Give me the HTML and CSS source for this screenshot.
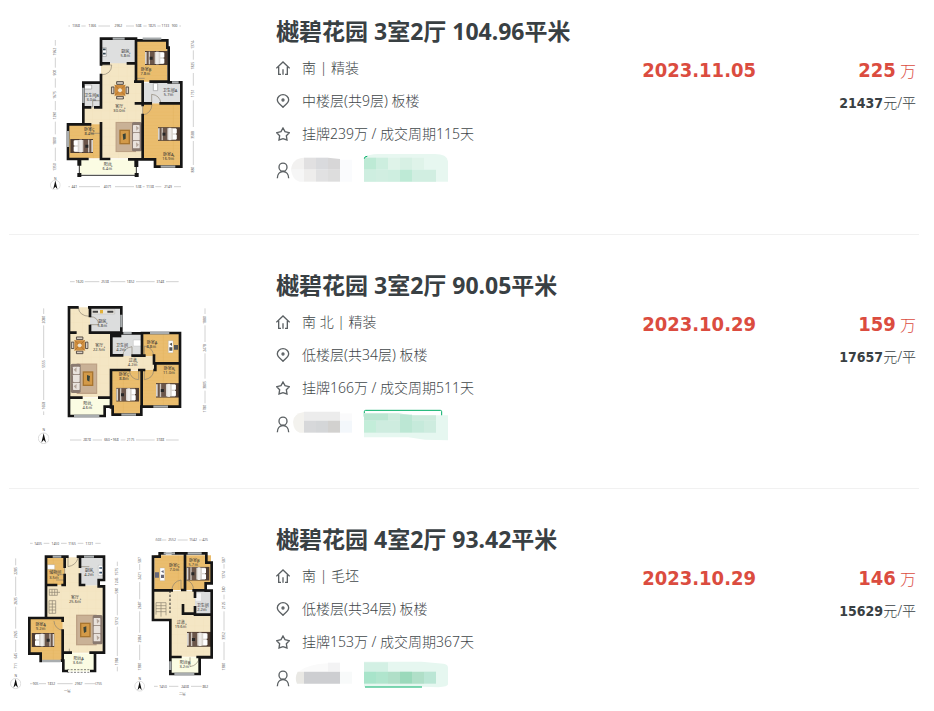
FILE: index.html
```
<!DOCTYPE html>
<html lang="zh-CN">
<head>
    <meta charset="UTF-8">
    <meta name="viewport" content="width=device-width, initial-scale=1.0">
    <title>樾碧花园 成交记录</title>
    <link rel="stylesheet" href="styles.css">
</head>
<body>
    <!-- shared icons and furniture -->
    <svg class="defs" width="0" height="0" aria-hidden="true">
        <symbol id="icon-home" viewBox="0 0 42 42">
            <path d="M1 22 L21 3 L41 22 M8 17 V40 H15 M34 17 V40 H27 M21 25 V41"/>
        </symbol>
        <symbol id="icon-pin" viewBox="0 0 42 42">
            <path d="M21 40 C16 34 4 27 4 17 A17 15 0 0 1 38 17 C38 27 26 34 21 40 Z"/>
            <circle cx="21" cy="18" r="3"/>
        </symbol>
        <symbol id="icon-star" viewBox="0 0 42 42">
            <path d="M21 3 L27 14 L40 17 L31 26 L33 39 L21 35 L9 39 L11 26 L2 17 L15 14 Z"/>
        </symbol>
        <symbol id="icon-user" viewBox="0 0 42 50">
            <circle cx="21" cy="15" r="12"/>
            <path d="M4 48 C4 36 11 28 21 28 C31 28 38 36 38 48"/>
        </symbol>
        <symbol id="bed" viewBox="0 0 68 42">
            <rect width="68" height="42" fill="#4d3b30"/>
            <rect y="3" width="56" height="36" fill="#d9d5d0"/>
            <rect x="5" y="2" width="24" height="38" fill="#6b564a"/>
            <rect x="11" y="2" width="4" height="38" fill="#cfc8c0"/>
            <rect x="33" y="2" width="8" height="38" fill="#eeebe8"/>
            <rect x="46" y="5" width="12" height="14" fill="#fff"/>
            <rect x="46" y="23" width="12" height="14" fill="#fff"/>
            <path d="M14 17 h9 v9 h-9z" fill="#262626"/>
        </symbol>
        <symbol id="sofa" viewBox="0 0 80 92">
            <rect width="62" height="92" fill="#bda286"/>
            <rect x="4" y="4" width="54" height="84" fill="#c9b196"/>
            <rect x="12" y="24" width="32" height="44" fill="#a8752f"/>
            <rect x="16" y="28" width="24" height="36" fill="#d39a48"/>
            <path d="M22 38 l9 -3 v16 l-7 4z" fill="#3a4438"/>
            <rect x="50" y="1" width="30" height="88" rx="5" fill="#8a7a70"/>
            <rect x="53" y="10" width="20" height="22" rx="2" fill="#e9e2dc"/>
            <rect x="53" y="34" width="20" height="22" rx="2" fill="#e9e2dc"/>
            <rect x="53" y="58" width="20" height="22" rx="2" fill="#e9e2dc"/>
            <path d="M62 12 l9 7 -8 8z M62 62 l9 7 -8 8z" fill="#b5a69b"/>
        </symbol>
        <symbol id="dining" viewBox="0 0 56 56">
            <path d="M18 2 h20 v8 h-20z M18 46 h20 v8 h-20z M2 18 h8 v20 h-8z M46 18 h8 v20 h-8z" fill="#d8cfc4" stroke="#554b43" stroke-width="3"/>
            <rect x="12" y="12" width="32" height="32" fill="#cf8d3e"/>
            <path d="M12 12 L44 44 M44 12 L12 44" stroke="#a56a2a" stroke-width="2"/>
            <circle cx="28" cy="28" r="6" fill="#eee3cf"/>
        </symbol>
        <symbol id="compass" viewBox="0 0 34 50">
            <circle cx="17" cy="31" r="16" fill="#fff" stroke="#ccc" stroke-width="2"/>
            <path d="M17 16 L24 44 L17 36 L10 44 Z" fill="#111"/>
        </symbol>
        <pattern id="wood" width="120" height="10" patternUnits="userSpaceOnUse">
            <rect width="120" height="10" fill="#eabd6e"/>
            <path d="M0 0 H120 M40 0 V10" stroke="#e0ae59"/>
        </pattern>
        <pattern id="tile" width="26" height="26" patternUnits="userSpaceOnUse">
            <rect width="26" height="26" fill="#f4e6c4"/>
            <path d="M0 0 H26 M0 0 V26" stroke="#efddb3"/>
        </pattern>
    </svg>

    <ul class="deal-list">
        <li class="deal">
            <svg class="plan" viewBox="-93 -9 720 534" role="img" aria-label="户型图">
                <path d="M183 72 H288 V200 H308 V430 H183 V280 H130 V325 H183 V280 Z" fill="url(#tile)"/>
                <rect x="130" y="275" width="58" height="54" fill="url(#tile)"/>
                <path d="M288 72 H382 V200 H288Z M308 265 H422 V453 H345 V433 H308Z M84 328 H183 V430 H84Z" fill="url(#wood)"/>
                <path d="M183 72 H288 V145 H183Z M130 203 H183 V277 H130Z M308 203 H422 V265 H308Z" fill="#dedfdf"/>
                <rect x="118" y="433" width="172" height="46" fill="#fbfce3"/>
                <use href="#bed" x="314" y="108" width="70" height="42"/>
                <use href="#bed" x="354" y="327" width="66" height="60"/>
                <use href="#bed" x="-160" y="372" width="70" height="42" transform="scale(-1 1)"/>
                <use href="#dining" x="212" y="198" width="56" height="56"/>
                <use href="#sofa" x="226" y="320" width="80" height="92"/>
                <path d="M187 98 h12 v26 h-12z M133 210 h22 v12 h-22z M340 205 h13 v22 h-13z" fill="#fff" stroke="#999" stroke-width="2"/>
                <path d="M189 103 h8 M189 116 h8" stroke="#344650" stroke-width="5"/>
                <path class="door" d="M183 150 h32 q0 28 -32 30 M308 268 v32 q26 -4 28 -32 M335 265 v-27 q24 2 28 27 M152 325 v30 h30 M158 277 v-20 h24 M288 168 v22 h26"/>
                <path class="wall" d="M183 148 V71 H288 V200 M288 76 H382 V98 H386 V200 H332 M288 145 H264 M183 145 H206 M183 180 V203 H130 V328 H84 V432 H142 M130 277 H150 M183 203 V277 H166 M130 328 H150 M183 325 V432 H207 M286 200 H308 V270 M288 265 H332 M362 265 H422 M386 202 H424 V455 H345 V433 H268 M308 300 V433"/>
                <path class="rail" d="M118 434 V481 H289 V434"/>
                <path d="M112 474 h12 v12 h-12z M284 474 h12 v12 h-12z M112 432 h12 v20 h-12z M283 432 h12 v24 h-12z" fill="#151515"/>
                <path class="glass" d="M218 71 h36 M308 71 h56 M396 202 h20 M130 218 v46 M84 348 v48 M362 455 h44"/>
                <g class="plan-label">
                    <text x="256" y="114">厨房</text><text x="256" y="126">5.8㎡</text>
                    <text x="318" y="169">卧室B</text><text x="316" y="181">7.8㎡</text>
                    <text x="155" y="246">卫生间B</text><text x="154" y="258">3.0㎡</text>
                    <text x="390" y="232">卫生间A</text><text x="386" y="244">5.7㎡</text>
                    <text x="238" y="278">客厅</text><text x="238" y="290">30.0㎡</text>
                    <text x="148" y="348">卧室C</text><text x="148" y="360">8.4㎡</text>
                    <text x="385" y="424">卧室A</text><text x="385" y="436">16.9㎡</text>
                    <text x="203" y="454">阳台</text><text x="202" y="466">6.4㎡</text>
                </g>
                <g class="plan-dim">
                    <text x="46" y="494">N</text>
                    <text x="108" y="37">1368</text><text x="157" y="37">1366</text><text x="235" y="37">2962</text><text x="296" y="37">508</text><text x="336" y="37">1825</text><text x="376" y="37">1133</text><text x="404" y="37">900</text>
                    <text x="103" y="519">441</text><text x="203" y="519">4071</text><text x="296" y="519">538</text><text x="330" y="519">1138</text><text x="384" y="519">2149</text>
                    <g transform="translate(49 0) rotate(-90)"><text x="-110">1962</text><text x="-173">900</text><text x="-240">1675</text><text x="-302">1290</text><text x="-378">1800</text><text x="-456">1350</text></g>
                    <g transform="translate(463 0) rotate(-90)"><text x="-90">1374</text><text x="-152">1825</text><text x="-235">1751</text><text x="-360">3588</text><text x="-464">880</text></g>
                </g>
                <path class="ruler" d="M85 33 H90 M124 33 H137 M175 33 H210 M258 33 H282 M310 33 H320 M352 33 H362 M418 33 H423 M85 515 H90 M117 515 H180 M225 515 H282 M308 515 H314 M346 515 H364 M402 515 H423 M46 75 V92 M46 128 V158 M46 190 V218 M46 258 V286 M46 320 V358 M46 398 V438 M460 75 V80 M460 106 V134 M460 174 V212 M460 256 V336 M460 378 V450"/>
                <use href="#compass" x="30" y="482" width="32" height="46"/>
            </svg>
            <div class="info">
                <h3 class="title">樾碧花园 3室2厅 104.96平米</h3>
                <p class="row"><svg class="icon"><use href="#icon-home"/></svg>南 | 精装</p>
                <p class="row"><svg class="icon"><use href="#icon-pin"/></svg>中楼层(共9层) 板楼</p>
                <p class="row"><svg class="icon"><use href="#icon-star"/></svg>挂牌239万 / 成交周期115天</p>
                <div class="agent">
                    <svg class="icon icon-user"><use href="#icon-user"/></svg>
                    <svg class="mosaic" viewBox="75 145 474 102" aria-hidden="true">
                        <path d="M117 159 Q82 160 78 195 H117Z" fill="#f2f1f0"/>
                        <path d="M78 195 H117 V231 H104 Q82 226 78 195Z" fill="#f6f6f6"/>
                        <path d="M117 159 h36 v36 h-36z" fill="#e1e0e1"/>
                        <path d="M153 159 h36 v36 h-36z" fill="#d9dadd"/>
                        <path d="M189 159 L225 163 V195 H189z" fill="#d7d6d7"/>
                        <path d="M117 195 h36 v36 h-36z" fill="#eeedec"/>
                        <path d="M153 195 h36 v36 h-36z" fill="#e1e1e2"/>
                        <path d="M189 195 h36 v36 h-36z" fill="#dddddd"/>
                        <path d="M225 165 h36 v66 h-36z" fill="#fafbfd"/>
                        <path d="M297 159 Q310 148 340 148 H510 Q546 148 549 170 V231 H297Z" fill="#e7f7f0"/>
                        <path d="M297 159 h36 v36 h-36z" fill="#bdead5"/>
                        <path d="M333 159 h36 v36 h-36z" fill="#cdeedf"/>
                        <path d="M369 159 h36 v36 h-36z M441 159 h36 v36 h-36z" fill="#dff3e9"/>
                        <path d="M405 159 h36 v36 h-36z" fill="#d7f0e4"/>
                        <path d="M297 195 h36 v36 h-36z M369 195 h36 v36 h-36z" fill="#ceeee0"/>
                        <path d="M333 195 h36 v36 h-36z M441 195 h72 v36 h-72z" fill="#d1eee1"/>
                        <path d="M405 195 h36 v36 h-36z" fill="#beead6"/>
                        <path d="M298 162 Q298 155 307 155" fill="none" stroke="#00ae66" stroke-width="3"/>
                    </svg>
                </div>
            </div>
            <div class="date">2023.11.05</div>
            <div class="price">
                <p class="total"><b>225</b> 万</p>
                <p class="unit"><b>21437</b>元/平</p>
            </div>
        </li>

        <li class="deal">
            <svg class="plan" viewBox="-63 -12 720 534" role="img" aria-label="户型图">
                <path d="M118 112 H180 V188 H243 V258 H376 V300 H243 V382 H118Z" fill="url(#tile)"/>
                <path d="M336 190 H448 V408 H336 V434 H244 V302 H336Z" fill="url(#wood)"/>
                <rect x="334" y="258" width="42" height="42" fill="url(#tile)"/>
                <path d="M180 114 H272 V188 H180Z M245 190 H336 V258 H245Z" fill="#dcdddd"/>
                <path d="M118 384 H242 V412 H226 V436 H118Z" fill="#fbfce3"/>
                <use href="#dining" x="122" y="198" width="54" height="56"/>
                <use href="#sofa" x="-203" y="280" width="82" height="92" transform="scale(-1 1)"/>
                <use href="#bed" x="258" y="353" width="70" height="42"/>
                <use href="#bed" x="378" y="331" width="70" height="60"/>
                <path d="M184 118 h70 v14 h-70z" fill="#e9e6df" stroke="#aaa"/>
                <path d="M188 122 h16 v6 h-16z M232 122 h18 v6 h-18z" fill="#444"/>
                <path d="M210 120 h9 v10 h-9z" fill="#e1b13a"/>
                <path d="M310 210 h24 v18 h-24z M415 212 h14 v36 h-14z" fill="#fff" stroke="#aaa"/>
                <path d="M418 222 l8 -4 v10z M418 232 h9 v10 h-9z M432 225 h12 v14 h-12z" fill="#555"/>
                <path class="door" d="M145 112 q2 26 34 27 M180 140 q24 0 26 24 h-26 M278 258 q2 -24 28 -28 v28 M343 258 v-30 q26 4 28 30 M298 302 q4 26 28 27 v-27 M343 302 v27 q26 -4 28 -27"/>
                <path class="wall" d="M142 112 H117 V438 H224 V410 H248 V434 H334 V410 H450 V189 H336 V256 M178 112 H274 V188 H180 V168 M180 114 V138 M244 188 V256 H276 M274 190 H336 M308 257 H343 M372 257 V280 H450 M376 280 V300 H374 M118 188 H136 M118 383 H154 M208 383 H243 V300 H298 M243 300 V412 M335 300 V410 M328 300 H342"/>
                <path d="M244 188 h30 v14 h-30z" fill="#151515"/>
                <path class="glass" d="M132 438 h76 M274 434 h44 M370 410 h44 M360 189 h58 M280 189 h25 M274 134 v38"/>
                <g class="plan-label">
                    <text x="217" y="160">厨房</text><text x="217" y="172">5.8㎡</text>
                    <text x="208" y="230">客厅</text><text x="207" y="242">22.5㎡</text>
                    <text x="276" y="230">卫生间</text><text x="273" y="242">4.2㎡</text>
                    <text x="366" y="221">卧室A</text><text x="364" y="233">8.8㎡</text>
                    <text x="308" y="277">过道</text><text x="308" y="289">4.2㎡</text>
                    <text x="417" y="299">卧室B</text><text x="417" y="311">11.0㎡</text>
                    <text x="282" y="318">卧室C</text><text x="282" y="330">8.8㎡</text>
                    <text x="172" y="406">阳台</text><text x="172" y="418">4.6㎡</text>
                </g>
                <g class="plan-dim">
                    <text x="41" y="484">N</text>
                    <text x="149" y="39">1620</text><text x="225" y="39">2538</text><text x="302" y="39">1852</text><text x="391" y="39">3148</text>
                    <text x="171" y="514">2878</text><text x="244" y="514">660 • 968</text><text x="302" y="514">2175</text><text x="391" y="514">3188</text>
                    <g transform="translate(44 0) rotate(-90)"><text x="-149">2080</text><text x="-282">5555</text><text x="-407">1658</text></g>
                    <g transform="translate(528 0) rotate(-90)"><text x="-150">1880</text><text x="-234">2478</text><text x="-345">3805</text><text x="-416">1780</text></g>
                </g>
                <path class="ruler" d="M120 35 H134 M164 35 H208 M241 35 H286 M318 35 H374 M408 35 H446 M120 510 H154 M188 510 H216 M272 510 H286 M318 510 H374 M408 510 H446 M41 115 V132 M41 166 V264 M41 300 V390 M41 424 V435 M525 115 V132 M525 166 V216 M525 250 V326 M525 362 V400"/>
                <use href="#compass" x="24" y="474" width="34" height="50"/>
            </svg>
            <div class="info">
                <h3 class="title">樾碧花园 3室2厅 90.05平米</h3>
                <p class="row"><svg class="icon"><use href="#icon-home"/></svg>南 北 | 精装</p>
                <p class="row"><svg class="icon"><use href="#icon-pin"/></svg>低楼层(共34层) 板楼</p>
                <p class="row"><svg class="icon"><use href="#icon-star"/></svg>挂牌166万 / 成交周期511天</p>
                <div class="agent">
                    <svg class="icon icon-user"><use href="#icon-user"/></svg>
                    <svg class="mosaic" viewBox="75 145 474 102" aria-hidden="true">
                        <path d="M117 160 Q84 165 84 190 Q86 218 104 222 H117Z" fill="#f3f2ee"/>
                        <path d="M117 159 h108 v27 h-108z" fill="#ececec"/>
                        <path d="M117 186 h36 v36 h-36z" fill="#d7d8da"/>
                        <path d="M153 186 h36 v36 h-36z" fill="#d4d6d8"/>
                        <path d="M189 186 h36 v36 h-36z" fill="#d2d1cf"/>
                        <path d="M225 164 h36 v22 h-36z" fill="#fafafb"/>
                        <path d="M225 186 h36 v36 h-36z" fill="#f3f7fb"/>
                        <path d="M298 174 V159 Q298 155 302 155 H526 Q530 155 530 159 V174" fill="none" stroke="#00ae66" stroke-width="3"/>
                        <path d="M297 164 H400 L440 170 H549 V245 L480 243 L430 236 H297Z" fill="#e6f7f0"/>
                        <path d="M297 164 H369 V186 H297Z" fill="#bbe6d2"/>
                        <path d="M369 164 H400 L440 170 H513 V186 H369Z" fill="#cdebdd"/>
                        <path d="M297 186 h36 v36 h-36z" fill="#c3edd9"/>
                        <path d="M333 186 h72 v36 h-72z M477 186 h36 v36 h-36z" fill="#ceecdf"/>
                        <path d="M405 168 h36 v54 h-36z" fill="#bce7d4"/>
                        <path d="M441 186 h36 v36 h-36z" fill="#c6eadb"/>
                    </svg>
                </div>
            </div>
            <div class="date">2023.10.29</div>
            <div class="price">
                <p class="total"><b>159</b> 万</p>
                <p class="unit"><b>17657</b>元/平</p>
            </div>
        </li>

        <li class="deal">
            <svg class="plan" viewBox="27 -30 720 534" role="img" aria-label="户型图">
                <!-- lower floor -->
                <g>
                    <path d="M140 82 H240 V166 H312 V368 H188 V264 H140Z" fill="url(#tile)"/>
                    <path d="M140 84 H194 V165 H140Z M90 266 H188 V392 H120 V370 H90Z" fill="url(#wood)"/>
                    <path d="M240 84 H310 V148 H294 V166 H240Z" fill="#dcdddd"/>
                    <path d="M192 370 H282 V424 H192Z" fill="#fbfce3"/>
                    <use href="#bed" x="-164" y="309" width="70" height="42" transform="scale(-1 1)"/>
                    <use href="#sofa" x="228" y="252" width="80" height="96"/>
                    <path d="M142 104 h22 v14 h-22z M295 106 h14 v30 h-14z" fill="#fff" stroke="#999"/>
                    <path d="M298 114 h8 M298 128 h8" stroke="#39516b" stroke-width="5"/>
                    <path class="stairs" d="M148 178 h24 v18 h-24z M156 178 v18 M164 178 v18 M148 187 h32 M147 212 h20 v38 h-20z M147 222 h20 M147 231 h20 M147 240 h20 M157 212 v38"/>
                    <path class="door" d="M204 84 v26 q24 -4 30 -26 M194 110 v24 h-24 M240 110 h28 M162 273 q2 24 26 28 M208 368 v-12 M168 150 h26"/>
                    <path class="wall" d="M202 80 H138 V264 H88 V371 H122 V393 M186 392 H190 V423 H200 M138 264 H188 V272 M188 302 V390 M138 165 H168 M194 80 V110 M194 135 V165 H188 M234 80 H312 V150 H296 V169 H312 V368 H272 M240 82 V110 M240 134 V165 H252 M188 368 H212 M285 368 V423 H274"/>
                    <path class="glass" d="M158 80 h26 M252 80 h30 M126 393 h56"/>
                    <path d="M202 419 H272 M202 427 H272" stroke="#444" stroke-width="2" stroke-dasharray="6 4"/>
                    <g class="plan-label">
                        <text x="166" y="133">储物间</text><text x="162" y="146">3.5㎡</text>
                        <text x="267" y="126">厨房</text><text x="267" y="138">4.2㎡</text>
                        <text x="225" y="208">客厅</text><text x="225" y="220">25.6㎡</text>
                        <text x="122" y="289">卧室A</text><text x="122" y="301">9.2㎡</text>
                        <text x="236" y="391">阳台A</text><text x="233" y="403">3.6㎡</text>
                    </g>
                    <g class="plan-dim">
                        <text x="47" y="441">N</text>
                        <text x="114" y="44">1405</text><text x="166" y="44">1450</text><text x="216" y="44">1165</text><text x="268" y="44">1721</text>
                        <text x="107" y="464">905</text><text x="154" y="464">1832</text><text x="236" y="464">2967</text><text x="296" y="464">(755</text>
                        <text x="202" y="486">一层</text>
                        <g transform="translate(50 0) rotate(-90)"><text x="-123">2285</text><text x="-213">2635</text><text x="-313">2925</text><text x="-377">645</text><text x="-408">711</text></g>
                        <g transform="translate(355 0) rotate(-90)"><text x="-125">1575</text><text x="-154">1245</text><text x="-182">580</text><text x="-273">5312</text><text x="-394">1384</text></g>
                    </g>
                    <path class="ruler" d="M90 40 H98 M131 40 H148 M183 40 H200 M233 40 H250 M286 40 H302 M90 461 H98 M117 461 H138 M172 461 H218 M254 461 H286 M47 85 V106 M47 140 V198 M47 230 V296 M47 330 V366 M352 95 V108 M352 192 V256 M352 290 V378 M352 410 V424"/>
                    <use href="#compass" x="30" y="431" width="34" height="48"/>
                </g>
                <!-- upper floor -->
                <g transform="translate(375 0)">
                    <path d="M86 182 H210 V254 H258 V380 H136 V270 H86Z" fill="url(#tile)"/>
                    <path d="M88 76 H258 V158 H240 V180 H88Z" fill="url(#wood)"/>
                    <path d="M210 186 H256 V252 H210Z" fill="#dcdddd"/>
                    <path d="M136 382 H222 V430 H136Z" fill="#fbfce3"/>
                    <use href="#bed" x="182" y="110" width="74" height="42"/>
                    <use href="#bed" x="186" y="298" width="72" height="60"/>
                    <path d="M105 114 h14 v38 h-14z" fill="#fff" stroke="#aaa"/>
                    <path d="M108 124 l8 -3 v9z M108 134 h9 v10 h-9z M90 127 h12 v16 h-12z" fill="#667"/>
                    <path d="M212 190 h16 v22 h-16z" fill="#f6f6f6"/>
                    <path class="stairs" d="M93 218 h30 v38 M93 218 v36 M93 227 h30 M93 236 h30 M93 245 h30 M108 218 v42"/>
                    <path d="M135 182 V250" stroke="#333" stroke-width="3" stroke-dasharray="7 5"/>
                    <path class="door" d="M140 180 q4 -26 28 -30 v30 M182 180 v-30 q22 4 24 30 M195 382 v28 q24 -4 28 -28"/>
                    <path class="wall" d="M118 70 H104 V80 H84 V270 H136 V432 H224 V382 H260 V254 H210 V232 M144 70 H244 V98 H260 V160 H242 V182 H260 V254 M180 72 V180 H172 M84 181 H140 M206 181 H242 M210 184 V200 M174 226 V251 H210 M136 381 H166 M218 381 H260"/>
                    <path class="glass" d="M116 70 h34 M188 70 h42 M148 432 h60 M136 394 v26"/>
                    <g class="plan-label">
                        <text x="148" y="110">卧室C</text><text x="148" y="122">7.0㎡</text>
                        <text x="208" y="95">卧室B</text><text x="205" y="107">5.7㎡</text>
                        <text x="233" y="230">卫生间</text><text x="231" y="243">2.2㎡</text>
                        <text x="167" y="282">过道</text><text x="167" y="294">19.6㎡</text>
                        <text x="180" y="403">阳台B</text><text x="178" y="415">3.2㎡</text>
                    </g>
                    <g class="plan-dim">
                        <text x="44" y="449">N</text>
                        <text x="101" y="34">503</text><text x="141" y="34">2552</text><text x="204" y="34">1542</text><text x="240" y="34">425</text>
                        <text x="114" y="473">1450</text><text x="180" y="473">2408</text><text x="241" y="473">862</text>
                        <text x="172" y="495">二层</text>
                        <g transform="translate(47 0) rotate(-90)"><text x="-90">587</text><text x="-138">2421</text><text x="-226">2687</text><text x="-326">2984</text><text x="-410">1380</text></g>
                        <g transform="translate(300 0) rotate(-90)"><text x="-90">587</text><text x="-135">1374</text><text x="-178">580</text><text x="-226">2125</text><text x="-318">3352</text><text x="-410">1380</text></g>
                    </g>
                    <path class="ruler" d="M90 30 H93 M111 30 H124 M158 30 H188 M222 30 H230 M87 469 H98 M132 469 H160 M198 469 H230 M44 102 V120 M44 156 V208 M44 244 V308 M44 344 V390 M297 102 V116 M297 194 V208 M297 244 V302 M297 336 V390"/>
                    <use href="#compass" x="27" y="440" width="34" height="46"/>
                </g>
            </svg>
            <div class="info">
                <h3 class="title">樾碧花园 4室2厅 93.42平米</h3>
                <p class="row"><svg class="icon"><use href="#icon-home"/></svg>南 | 毛坯</p>
                <p class="row"><svg class="icon"><use href="#icon-pin"/></svg>低楼层(共34层) 板楼</p>
                <p class="row"><svg class="icon"><use href="#icon-star"/></svg>挂牌153万 / 成交周期367天</p>
                <div class="agent">
                    <svg class="icon icon-user"><use href="#icon-user"/></svg>
                    <svg class="mosaic" viewBox="75 145 474 102" aria-hidden="true">
                        <path d="M100 177 Q130 154 189 152 V177Z" fill="#fafafa"/>
                        <path d="M189 150 h36 v27 h-36z" fill="#f3f3f4"/>
                        <path d="M117 177 H98 Q88 195 96 213 H117Z" fill="#e9e8e4"/>
                        <path d="M117 177 h108 v36 h-108z" fill="#cdced1"/>
                        <path d="M225 177 h36 v36 h-36z" fill="#f8fafa"/>
                        <path d="M297 147 H470 L535 153 Q549 155 549 165 V215 Q549 222 520 224 L470 222 H297Z" fill="#e6f7f0"/>
                        <path d="M297 149 h72 v28 h-72z" fill="#d3f0e4"/>
                        <path d="M297 177 h36 v36 h-36z" fill="#a8e4ca"/>
                        <path d="M333 177 h36 v36 h-36z" fill="#b0e5cd"/>
                        <path d="M369 177 h36 v36 h-36z M441 177 h36 v36 h-36z" fill="#b0dfc8"/>
                        <path d="M405 177 h36 v36 h-36z" fill="#9bd9bb"/>
                        <path d="M477 177 h36 v36 h-36z" fill="#bbe6d5"/>
                        <path d="M300 223 H471" stroke="#00ae66" stroke-width="3"/>
                    </svg>
                </div>
            </div>
            <div class="date">2023.10.29</div>
            <div class="price">
                <p class="total"><b>146</b> 万</p>
                <p class="unit"><b>15629</b>元/平</p>
            </div>
        </li>
    </ul>
</body>
</html>
```
FILE: styles.css
```
body {
    margin: 0;
    background: #fff;
    color: #394043;
    font-family: "Noto Sans", "Noto Sans CJK SC", sans-serif;
    font-size: 14px;
}
h3, p {
    margin: 0;
}
.defs {
    position: absolute;
}
.deal-list {
    list-style: none;
    margin: 0;
    padding: 0 15px 0 9px;
}
.deal {
    display: flex;
    padding: 31px 3px 44px 0;
    border-bottom: 1px solid #f1f1f1;
}
.deal:first-child {
    padding-top: 12px;
}
.deal:last-child {
    border-bottom: none;
    padding-bottom: 10px;
}
.plan {
    flex: none;
    width: 240px;
    height: 178px;
    margin-right: 27px;
}
.info {
    flex: 1;
    min-width: 0;
}
.title {
    font-size: 23px;
    font-weight: bold;
    line-height: 38px;
    margin-bottom: 1px;
}
.row {
    display: flex;
    align-items: center;
    gap: 12px;
    line-height: 33px;
    color: #41474a;
    font-weight: 300;
}
.icon {
    flex: none;
    width: 14px;
    height: 14px;
    fill: none;
    stroke: #5b6063;
    stroke-width: 4;
}
.icon-user {
    height: 17px;
}
.agent {
    display: flex;
    align-items: center;
    height: 40px;
}
.mosaic {
    width: 158px;
    height: 34px;
}
.date {
    padding-top: 41px;
    line-height: 34px;
    font-family: "DejaVu Sans Condensed", "DejaVu Sans", sans-serif;
    font-size: 20px;
    font-weight: bold;
    color: #db4c3f;
}
.price {
    width: 160px;
    padding-top: 41px;
    text-align: right;
    font-weight: 300;
}
.price b {
    font-family: "DejaVu Sans Condensed", "DejaVu Sans", sans-serif;
    font-weight: bold;
}
.total {
    font-size: 16px;
    line-height: 34px;
    color: #db4c3f;
}
.total b {
    font-size: 20px;
}
.unit {
    line-height: 30px;
}

/* floor plans */
.wall {
    fill: none;
    stroke: #151515;
    stroke-width: 8;
    stroke-linecap: square;
}
.rail {
    fill: none;
    stroke: #333;
    stroke-width: 3;
}
.glass {
    stroke: #a9adaf;
    stroke-width: 7;
}
.door, .stairs {
    fill: none;
    stroke: #8b8271;
    stroke-width: 2;
}
.plan-label {
    font-size: 12px;
    fill: #333;
    text-anchor: middle;
}
.plan-dim {
    font-size: 10px;
    fill: #555;
    text-anchor: middle;
}
.ruler {
    stroke: #bbb;
    stroke-width: 2;
}
```
